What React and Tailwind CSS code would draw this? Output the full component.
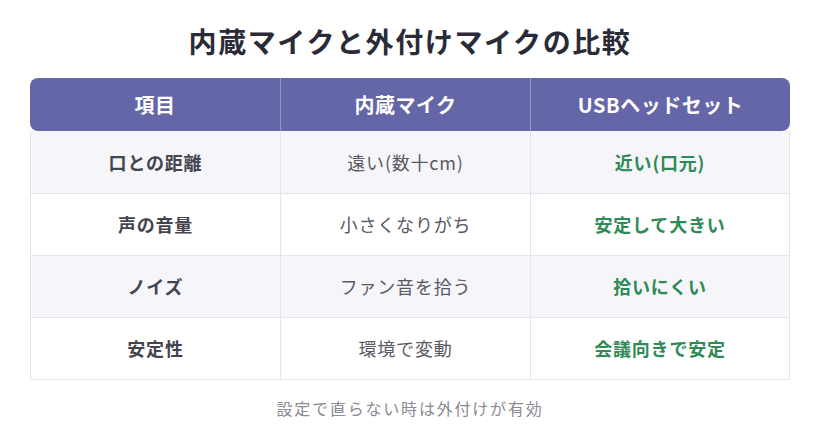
import React from 'react';

const rows = [
  { label: '口との距離', builtin: '遠い(数十cm)', usb: '近い(口元)' },
  { label: '声の音量', builtin: '小さくなりがち', usb: '安定して大きい' },
  { label: 'ノイズ', builtin: 'ファン音を拾う', usb: '拾いにくい' },
  { label: '安定性', builtin: '環境で変動', usb: '会議向きで安定' },
];

const font = { fontFamily: '"Noto Sans CJK JP", "Noto Sans", sans-serif' };

const App = () => {
  return (
    <div className="w-[820px] h-[430px] bg-white flex flex-col items-center" style={font}>
      <h1 className="mt-[21px] h-[40px] text-[28px] leading-[40px] font-bold tracking-[1.6px] text-[#2b2b38]">
        内蔵マイクと外付けマイクの比較
      </h1>

      <div className="mt-[17px] w-[760px] flex flex-col">
        <div className="h-[53px] grid grid-cols-[250px_250px_1fr] bg-[#6466a8] rounded-lg text-white text-[20px] font-bold tracking-[0.5px]">
          <div className="flex items-center justify-center">項目</div>
          <div className="flex items-center justify-center border-l border-[#9496c8]">内蔵マイク</div>
          <div className="flex items-center justify-center border-l border-[#9496c8]">USBヘッドセット</div>
        </div>

        <div className="border-x border-b border-[#e4e4ee]">
          {rows.map((r, i) => (
            <div
              key={r.label}
              className={`h-[62px] grid grid-cols-[249px_250px_1fr] text-[18px] tracking-[0.8px] ${
                i % 2 === 0 ? 'bg-[#f5f5fa]' : 'bg-white'
              } ${i > 0 ? 'border-t border-[#e4e4ee]' : ''}`}
            >
              <div className="flex items-center justify-center font-bold text-[#44444f]">{r.label}</div>
              <div className="flex items-center justify-center border-l border-[#e4e4ee] text-[#5a5a64]">
                {r.builtin}
              </div>
              <div className="flex items-center justify-center border-l border-[#e4e4ee] font-bold text-[#2e8a56]">
                {r.usb}
              </div>
            </div>
          ))}
        </div>
      </div>

      <p className="mt-[16px] text-[16px] tracking-[1.8px] text-[#8a8a92]">設定で直らない時は外付けが有効</p>
    </div>
  );
};

export default App;
